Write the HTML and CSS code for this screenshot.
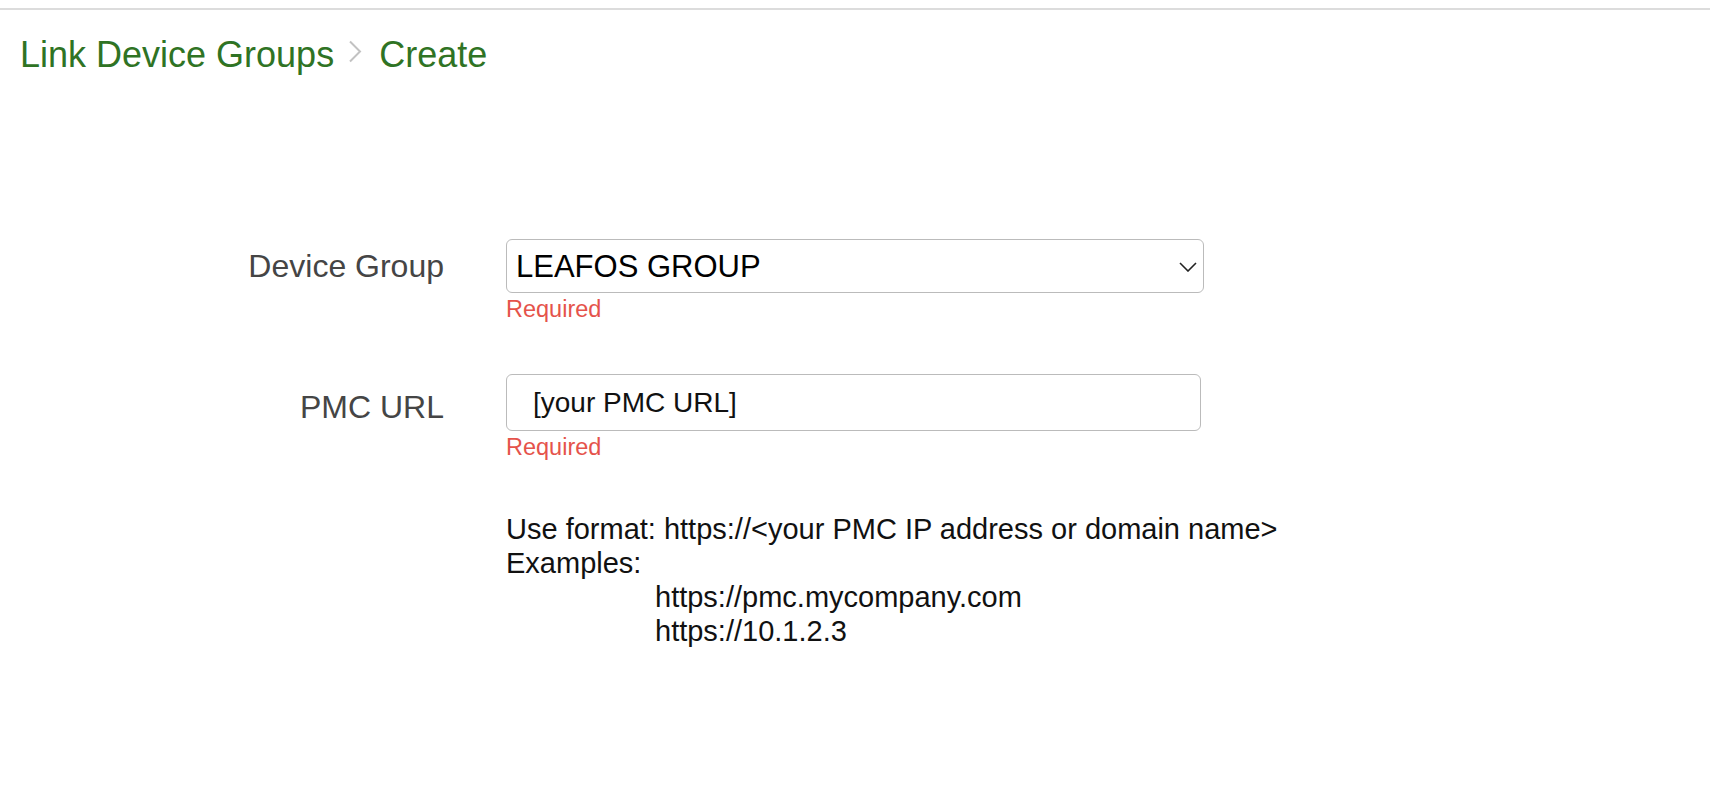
FILE: index.html
```html
<!DOCTYPE html>
<html lang="en">
<head>
    <meta charset="UTF-8">
    <meta name="viewport" content="width=device-width, initial-scale=1.0">
    <title>Link Device Groups - Create</title>
    <link rel="stylesheet" href="styles.css">
</head>
<body>
    <div class="topbar"></div>

    <nav class="breadcrumb">
        <span class="crumb">Link Device Groups</span>
        <svg class="sep" width="14" height="23" viewBox="0 0 14 23">
            <path d="M2 1.5 L12 11.5 L2 21.5" fill="none" stroke="#c2c2c2" stroke-width="2"/>
        </svg>
        <span class="crumb">Create</span>
    </nav>

    <form class="form">
        <label class="label label-group" for="deviceGroup">Device Group</label>
        <div class="field">
            <div class="select-wrap">
                <select id="deviceGroup" class="select">
                    <option>LEAFOS GROUP</option>
                </select>
                <svg class="caret" width="18" height="10" viewBox="0 0 18 10">
                    <path d="M1 1 L9 9 L17 1" fill="none" stroke="#222" stroke-width="1.6"/>
                </svg>
            </div>
            <div class="error">Required</div>
        </div>

        <label class="label label-url" for="pmcUrl">PMC URL</label>
        <div class="field">
            <input type="text" id="pmcUrl" class="input" value="[your PMC URL]">
            <div class="error">Required</div>
        </div>

        <div class="help">
            <div>Use format: https://&lt;your PMC IP address or domain name&gt;</div>
            <div>Examples:</div>
            <div class="example">https://pmc.mycompany.com</div>
            <div class="example">https://10.1.2.3</div>
        </div>
    </form>
</body>
</html>
```

FILE: styles.css
```css
body {
    font-family: "Liberation Sans", Helvetica, Arial, sans-serif;
    margin: 0;
    padding: 0;
    background-color: #fff;
}

.topbar {
    height: 8px;
    border-bottom: 2px solid #dcdcdc;
}

.breadcrumb {
    display: flex;
    align-items: flex-start;
    margin-top: 25px;
    padding-left: 20px;
    font-size: 36px;
    line-height: 40px;
    color: #2f7324;
}

.breadcrumb .sep {
    margin: 5px 17px 0 14px;
}

.form {
    display: grid;
    grid-template-columns: 444px 698px;
    column-gap: 62px;
    row-gap: 52px;
    padding-top: 164px;
}

.label {
    text-align: right;
    font-size: 32px;
    color: #454545;
}

.label-group {
    line-height: 54px;
}

.label-url {
    line-height: 57px;
    padding-top: 5px;
}

.select-wrap {
    position: relative;
    width: 698px;
}

.select {
    display: block;
    width: 100%;
    height: 54px;
    margin: 0;
    padding: 0 40px 0 9px;
    border: 1px solid #bbb;
    border-radius: 6px;
    background-color: #fff;
    font-family: inherit;
    font-size: 31px;
    color: #000;
    appearance: none;
    -webkit-appearance: none;
}

.caret {
    position: absolute;
    right: 7px;
    top: 23px;
    pointer-events: none;
}

.input {
    display: block;
    box-sizing: border-box;
    width: 695px;
    height: 57px;
    margin: 0;
    padding: 0 10px 0 26px;
    border: 1px solid #bbb;
    border-radius: 6px;
    font-family: inherit;
    font-size: 28px;
    color: #111;
}

.error {
    margin-top: 3px;
    font-size: 23.5px;
    line-height: 26px;
    color: #e5534b;
}

.help {
    grid-column: 2;
    font-size: 29px;
    line-height: 34px;
    color: #111;
    white-space: nowrap;
}

.help .example {
    padding-left: 149px;
}
```
